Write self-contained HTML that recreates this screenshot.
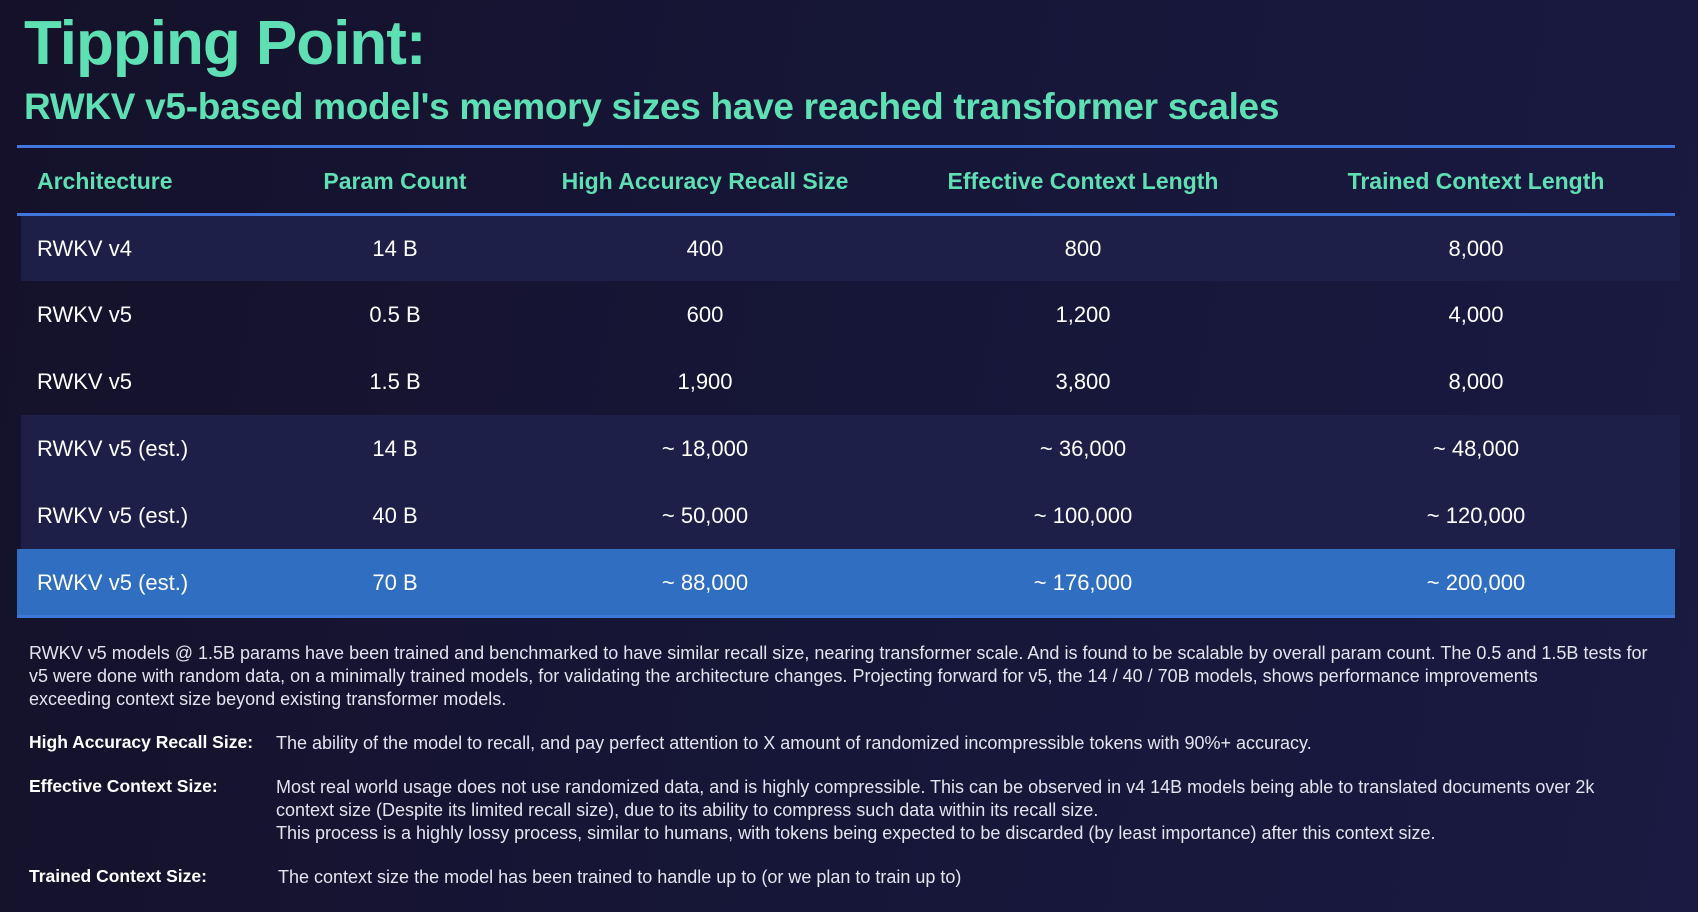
<!DOCTYPE html>
<html><head><style>
*{margin:0;padding:0;box-sizing:border-box}
body{width:1698px;height:912px;overflow:hidden;background:linear-gradient(100deg,#15112a 0%,#161638 50%,#1a1a42 100%);font-family:"Liberation Sans",sans-serif;color:#fff;position:relative}
.a{position:absolute;white-space:nowrap}
.g{color:#5fdfb4;font-weight:bold}
.line{position:absolute;left:17px;width:1658px;height:3px;background:#3f78dc}
.band{position:absolute;left:21px;width:1659px;height:67px;background:#1e1f48}
.row{position:absolute;left:0;width:1698px;height:67px;font-size:22px;line-height:67px}
.row span,.hd span{position:absolute;transform:translateX(-50%);white-space:nowrap}
.row span.l,.hd span.l{transform:none;left:37px}
.hd{position:absolute;top:148px;height:66px;width:1698px;line-height:66px;font-size:23px;color:#5fdfb4;font-weight:bold}
.p{font-size:18px;color:#e4e4ee;line-height:23px}
.b{font-weight:bold;font-size:17.5px}
</style></head><body>
<div class="a g" style="left:24px;top:8px;font-size:62px;letter-spacing:-1px">Tipping Point:</div>
<div class="a g" style="left:24px;top:86px;font-size:37px;letter-spacing:-0.3px">RWKV v5-based model's memory sizes have reached transformer scales</div>
<div class="line" style="top:145px"></div>
<div class="hd"><span class="l">Architecture</span><span style="left:395px">Param Count</span><span style="left:705px">High Accuracy Recall Size</span><span style="left:1083px">Effective Context Length</span><span style="left:1476px">Trained Context Length</span></div>
<div class="line" style="top:213px"></div>
<div class="band" style="top:216px;height:65px"></div>
<div class="band" style="top:415px;height:134px"></div>
<div class="band" style="top:549px;left:17px;width:1658px;height:67px;background:#2f6ec0"></div>
<div class="line" style="top:615px"></div>
<div class="row" style="top:215px"><span class="l">RWKV v4</span><span style="left:395px">14 B</span><span style="left:705px">400</span><span style="left:1083px">800</span><span style="left:1476px">8,000</span></div>
<div class="row" style="top:281px"><span class="l">RWKV v5</span><span style="left:395px">0.5 B</span><span style="left:705px">600</span><span style="left:1083px">1,200</span><span style="left:1476px">4,000</span></div>
<div class="row" style="top:348px"><span class="l">RWKV v5</span><span style="left:395px">1.5 B</span><span style="left:705px">1,900</span><span style="left:1083px">3,800</span><span style="left:1476px">8,000</span></div>
<div class="row" style="top:415px"><span class="l">RWKV v5 (est.)</span><span style="left:395px">14 B</span><span style="left:705px">~ 18,000</span><span style="left:1083px">~ 36,000</span><span style="left:1476px">~ 48,000</span></div>
<div class="row" style="top:482px"><span class="l">RWKV v5 (est.)</span><span style="left:395px">40 B</span><span style="left:705px">~ 50,000</span><span style="left:1083px">~ 100,000</span><span style="left:1476px">~ 120,000</span></div>
<div class="row" style="top:549px"><span class="l">RWKV v5 (est.)</span><span style="left:395px">70 B</span><span style="left:705px">~ 88,000</span><span style="left:1083px">~ 176,000</span><span style="left:1476px">~ 200,000</span></div>
<div class="a p" style="left:29px;top:642px;width:1660px;white-space:normal">RWKV v5 models @ 1.5B params have been trained and benchmarked to have similar recall size, nearing transformer scale. And is found to be scalable by overall param count. The 0.5 and 1.5B tests for<br>v5 were done with random data, on a minimally trained models, for validating the architecture changes. Projecting forward for v5, the 14 / 40 / 70B models, shows performance improvements<br>exceeding context size beyond existing transformer models.</div>
<div class="a b" style="left:29px;top:732px">High Accuracy Recall Size:</div>
<div class="a p" style="left:276px;top:732px">The ability of the model to recall, and pay perfect attention to X amount of randomized incompressible tokens with 90%+ accuracy.</div>
<div class="a b" style="left:29px;top:776px">Effective Context Size:</div>
<div class="a p" style="left:276px;top:776px">Most real world usage does not use randomized data, and is highly compressible. This can be observed in v4 14B models being able to translated documents over 2k<br>context size (Despite its limited recall size), due to its ability to compress such data within its recall size.<br>This process is a highly lossy process, similar to humans, with tokens being expected to be discarded (by least importance) after this context size.</div>
<div class="a b" style="left:29px;top:866px">Trained Context Size:</div>
<div class="a p" style="left:278px;top:866px">The context size the model has been trained to handle up to (or we plan to train up to)</div>
</body></html>
